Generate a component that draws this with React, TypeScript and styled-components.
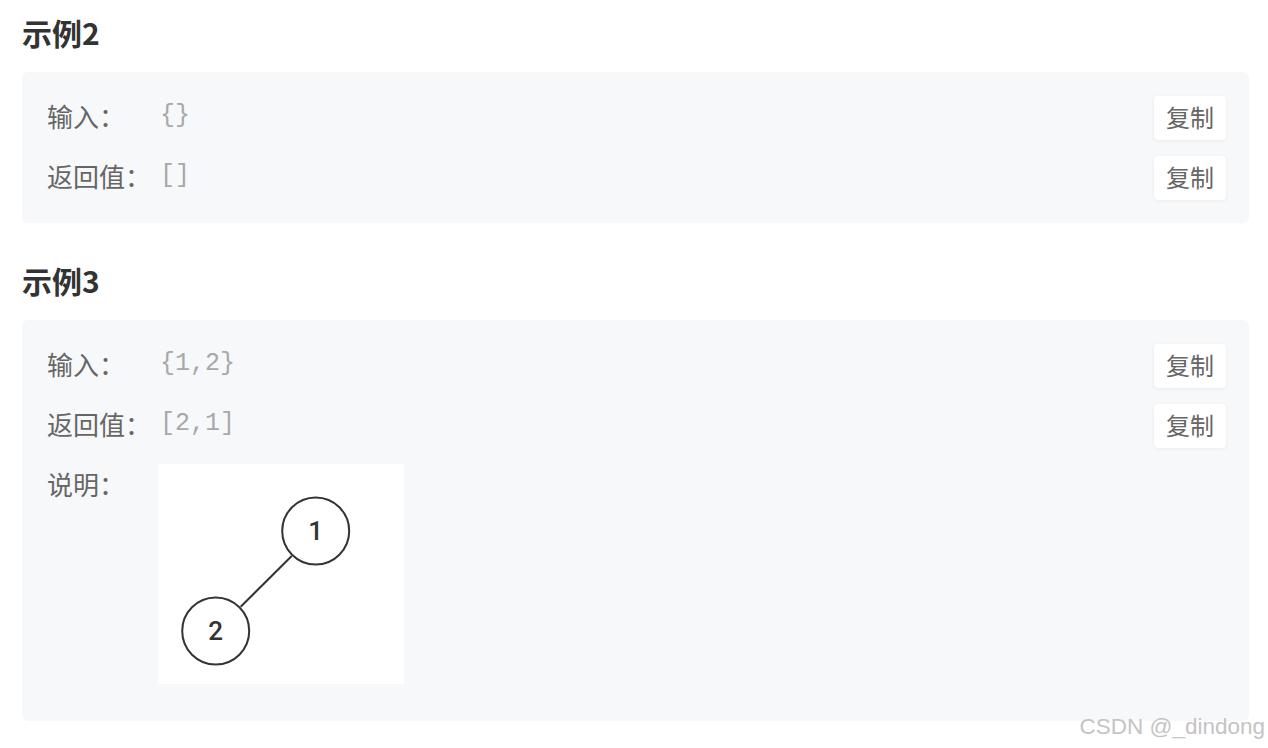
import React from "react";
import styled, { createGlobalStyle } from "styled-components";

const GlobalStyle = createGlobalStyle`
  html, body { margin: 0; padding: 0; background: #ffffff; }
  body { font-family: "Noto Sans CJK SC", "Noto Sans", sans-serif; }
  * { box-sizing: border-box; }
`;

const Page = styled.div`
  position: relative;
  width: 1268px;
  height: 748px;
  padding: 12px 19px 0 22px;
  overflow: hidden;
`;

const Heading = styled.h3`
  margin: 0 0 20px 0;
  height: 40px;
  line-height: 40px;
  font-size: 30px;
  font-weight: 600;
  color: #333333;
`;

const Card = styled.div<{ $extraBottom?: number }>`
  display: flex;
  flex-direction: column;
  gap: 16px;
  background: #f7f8fa;
  border-radius: 6px;
  padding: 24px 23px ${(p) => 23 + (p.$extraBottom ?? 0)}px 25px;
  margin-bottom: 37px;
`;

const Row = styled.div<{ $top?: boolean }>`
  display: flex;
  align-items: ${(p) => (p.$top ? "flex-start" : "center")};
  min-height: 44px;
`;

const Label = styled.span`
  flex: 0 0 111px;
  font-size: 26px;
  line-height: 40px;
  padding-bottom: 4px;
  color: #666666;
`;

const Value = styled.span`
  flex: 1;
  font-family: "Liberation Mono", "DejaVu Sans Mono", monospace;
  font-size: 25px;
  line-height: 40px;
  padding-bottom: 4px;
  color: #a8a8a8;
  padding-left: 2px;
`;

const CopyButton = styled.button`
  flex: 0 0 auto;
  width: 72px;
  height: 44px;
  border: none;
  border-radius: 4px;
  background: #ffffff;
  box-shadow: 0 1px 4px rgba(0, 0, 0, 0.06);
  font-family: "Noto Sans CJK SC", "Noto Sans", sans-serif;
  font-size: 24px;
  line-height: 42px;
  color: #666666;
  padding: 0 0 2px 0;
  cursor: pointer;
`;

const Figure = styled.div`
  width: 246px;
  height: 220px;
  background: #ffffff;
`;

const Watermark = styled.div`
  position: absolute;
  right: 3px;
  bottom: 8px;
  font-family: "Liberation Sans", Arial, sans-serif;
  font-size: 22.5px;
  color: #c4c4c4;
  text-shadow: 0 0 1px #ffffff, 1px 1px 1px rgba(255, 255, 255, 0.9);
`;

const TreeDrawing: React.FC = () => (
  <svg width="246" height="220" viewBox="0 0 246 220">
    <line x1="133.7" y1="92" x2="82.7" y2="142.7" stroke="#333" strokeWidth="2" />
    <circle cx="157.7" cy="67" r="33.5" fill="#fff" stroke="#333" strokeWidth="2" />
    <circle cx="57.7" cy="167" r="33.5" fill="#fff" stroke="#333" strokeWidth="2" />
    <text x="157.7" y="76" textAnchor="middle" fontFamily="Roboto, sans-serif" fontSize="26" fontWeight="500" fill="#333">1</text>
    <text x="57.7" y="176" textAnchor="middle" fontFamily="Roboto, sans-serif" fontSize="26" fontWeight="500" fill="#333">2</text>
  </svg>
);

const IORow: React.FC<{ label: string; value: string }> = ({ label, value }) => (
  <Row>
    <Label>{label}</Label>
    <Value>{value}</Value>
    <CopyButton>复制</CopyButton>
  </Row>
);

export default function App() {
  return (
    <>
      <GlobalStyle />
      <Page>
        <Heading>示例2</Heading>
        <Card>
          <IORow label="输入：" value="{}" />
          <IORow label="返回值：" value="[]" />
        </Card>
        <Heading>示例3</Heading>
        <Card $extraBottom={14}>
          <IORow label="输入：" value="{1,2}" />
          <IORow label="返回值：" value="[2,1]" />
          <Row $top>
            <Label>说明：</Label>
            <Figure>
              <TreeDrawing />
            </Figure>
          </Row>
        </Card>
        <Watermark>CSDN @_dindong</Watermark>
      </Page>
    </>
  );
}
